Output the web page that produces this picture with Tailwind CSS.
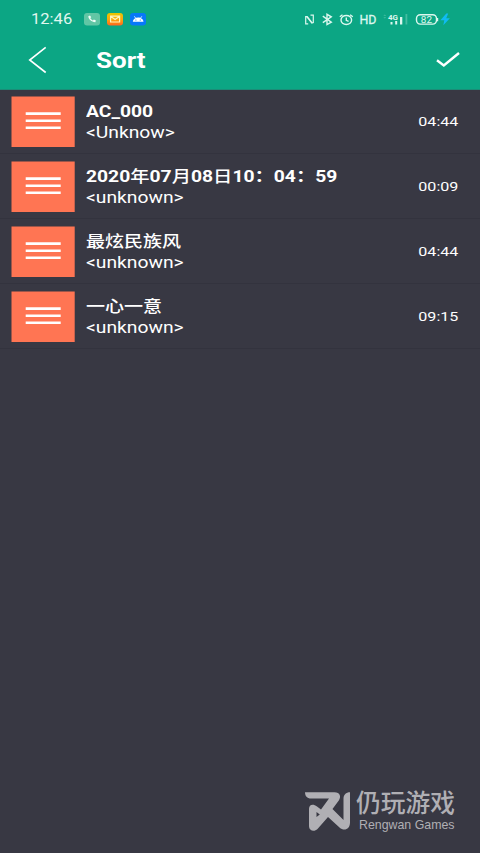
<!DOCTYPE html>
<html lang="en">
<head>
<meta charset="utf-8">
<title>Sort</title>
<script src="https://cdn.jsdelivr.net/npm/@tailwindcss/browser@4"></script>
</head>
<body class="bg-[#383843]">
<svg class="hidden">
  <symbol id="handle" viewBox="0 0 64 51"><path d="M0.5 0.4H63.7V51H0.5z" fill="#ff7553"/><path d="M14.7 17.6h35M14.7 24.7h35M14.7 31.7h35" stroke="#fff" stroke-width="2.6"/></symbol>
</svg>
<main class="flex h-[853px] w-[480px] flex-col overflow-hidden bg-[#383843] font-[Roboto,'Noto_Sans_CJK_SC',sans-serif] text-white">
  <header class="h-[90px] shrink-0 border-b border-[#1b8d78] bg-[#0ca684]">
    <div class="flex h-[38px] items-center pl-[31px] text-[#e0f7ef]">
      <span class="w-[53px]"><span class="inline-block origin-left scale-x-[1.2] text-[13.8px] leading-[38px]">12:46</span></span>
      <svg class="h-[14px] w-[62px]" viewBox="0 0 62 14">
        <defs><linearGradient id="mail" x2="0" y2="1"><stop stop-color="#e8c800"/><stop offset=".5" stop-color="#fba80c"/><stop offset="1" stop-color="#ff6420"/></linearGradient></defs>
        <rect x="0" y="1" width="16" height="12.6" rx="3" fill="#61c6a5"/>
        <path d="M4.300 4.200c.3 3.100 3.200 5.700 7 6l.6-1.700-2-1-1 .9C7.600 7.800 6.700 6.900 6.300 6l.9-.8-1.200-1.700z" fill="#f0fff9"/>
        <rect x="23" y="1" width="16" height="12.600" rx="3" fill="url(#mail)"/>
        <path d="M26.600 4.200h9v5.800h-9zM26.800 4.400l4.300 3 4.300-3" fill="none" stroke="#fff5bd" stroke-width="1.200"/>
        <rect x="46" y="1" width="16" height="12.600" rx="3" fill="#0878f9"/>
        <path d="M48.800 9.800c.2-2.700 2.500-4.400 5.300-4.400s5.200 1.700 5.400 4.400z" fill="#fff"/><path d="m50.400 4.300 1.300 1.900M57.800 4.300l-1.300 1.900" stroke="#fff" stroke-width=".8"/><circle cx="51.900" cy="8" r=".6" fill="#0878f9"/><circle cx="56.300" cy="8" r=".6" fill="#0878f9"/>
      </svg>
      <svg class="ml-[154px] h-[20px] w-[160px]" viewBox="300 9 160 20" fill="none" stroke="#dcf7ee" stroke-width="1.400">
        <path d="M308.200 23.800h-2.500v-7.200l1.600-.1 5.300 6.800M310.500 15.200h2.800v7.400l-1.500.5-5.300-6.800" stroke-width="1.200"/>
        <path d="m322.800 16.200 8.500 5.900-4.300 2.500V14.300l4.300 2.500-8.500 5.900"/>
        <ellipse cx="346.300" cy="20" rx="5.300" ry="4.500"/><path d="M346.300 17.500V20.300l2.300 1M339.800 16.800l2.700-2.100M352.800 16.800l-2.700-2.100"/>
        <g fill="#dcf7ee" stroke="none" font-family="Roboto">
          <text x="359.500" y="24.200" font-size="12.600" stroke="#dcf7ee" stroke-width=".3" textLength="17" lengthAdjust="spacingAndGlyphs">HD</text>
          <text x="388" y="19.600" font-size="8" font-weight="700" textLength="10" lengthAdjust="spacingAndGlyphs">4G</text>
          <text x="420.800" y="22.900" font-size="9" textLength="11.200" lengthAdjust="spacingAndGlyphs">82</text>
          <path d="M390.500 22h2v2.500h-2zM395.200 21h2v3.500h-2zM400 17h2.300v7.500H400z"/>
          <path d="M405.500 14h1.800v10.500h-1.800zM383.300 15.700l1.500-1.200 1.500 1.200zM383.300 17.200l1.500 1.200 1.500-1.200z" opacity=".28"/>
        </g>
        <rect x="416.500" y="14.700" width="20" height="9.400" rx="3.800"/><path d="M437.600 18v3.300" stroke-width="1.200"/>
        <path d="M446.300 13.600l-5.900 6.600h3.900l-1 5 6.600-6.900h-3.700l2-4.700z" fill="#10bbf3" stroke="none"/>
      </svg>
    </div>
    <div class="flex h-[44px] items-center">
      <svg class="ml-[28px] h-[28px] w-[20px]" viewBox="0 0 20 28" fill="none" stroke="#fff" stroke-width="1.600"><path d="M17.700 1.300 1.700 14l16 12.500"/></svg>
      <h1 class="ml-[48px] origin-left scale-x-[1.18] text-[22px] leading-[45px] font-bold">Sort</h1>
      <svg class="mr-[20px] ml-auto h-[18px] w-[25px]" viewBox="0 0 25 18" fill="none" stroke="#fff" stroke-width="2.400"><path d="m2 9.300 6.800 5.200L24 2"/></svg>
    </div>
  </header>
  <ul>
    <li class="flex h-[64px] items-start border-b border-[#33333e] pt-[6px] pl-[11px]">
      <svg class="h-[51px] w-[64px]"><use href="#handle"/></svg>
      <div class="ml-[11px] origin-left scale-x-[1.22] pt-[6px] text-[15.800px] leading-[20px] whitespace-nowrap"><p class="font-bold">AC_000</p><p class="leading-[21px]">&lt;Unknow&gt;</p></div>
      <time class="mr-[22px] ml-auto origin-right scale-x-[1.2] text-[13.400px] leading-[52px]">04:44</time>
    </li>
    <li class="flex h-[65px] items-start border-b border-[#33333e] pt-[7px] pl-[11px]">
      <svg class="h-[51px] w-[64px]"><use href="#handle"/></svg>
      <div class="ml-[11px] origin-left scale-x-[1.22] pt-[6px] text-[15.800px] leading-[20px] whitespace-nowrap"><p class="font-bold">2020<span class="font-medium">年</span>07<span class="font-medium">月</span>08<span class="font-medium">日</span>10：04：59</p><p class="leading-[21px]">&lt;unknown&gt;</p></div>
      <time class="mr-[22px] ml-auto origin-right scale-x-[1.2] text-[13.400px] leading-[52px]">00:09</time>
    </li>
    <li class="flex h-[65px] items-start border-b border-[#33333e] pt-[7px] pl-[11px]">
      <svg class="h-[51px] w-[64px]"><use href="#handle"/></svg>
      <div class="ml-[11px] origin-left scale-x-[1.22] pt-[6px] text-[15.800px] leading-[20px] whitespace-nowrap"><p class="text-[15.600px] font-medium">最炫民族风</p><p class="leading-[21px]">&lt;unknown&gt;</p></div>
      <time class="mr-[22px] ml-auto origin-right scale-x-[1.2] text-[13.400px] leading-[52px]">04:44</time>
    </li>
    <li class="flex h-[65px] items-start border-b border-[#33333e] pt-[7px] pl-[11px]">
      <svg class="h-[51px] w-[64px]"><use href="#handle"/></svg>
      <div class="ml-[11px] origin-left scale-x-[1.22] pt-[6px] text-[15.800px] leading-[20px] whitespace-nowrap"><p class="text-[15.600px] font-medium">一心一意</p><p class="leading-[21px]">&lt;unknown&gt;</p></div>
      <time class="mr-[22px] ml-auto origin-right scale-x-[1.2] text-[13.400px] leading-[52px]">09:15</time>
    </li>
  </ul>
  <footer class="mt-auto mb-[13px] ml-[300px]">
    <svg class="h-[60px] w-[170px]" viewBox="0 0 170 60" fill="#b0afb4">
      <path d="M5 12.200H34.500c5.500 0 7 4.500 4.300 8.200L32.500 29 43.500 40V18.500c0-3.700 2.500-6.300 6.500-6.300V42.500c0 7-6 9-10.500 5L28 37 17.500 49c-3.500 3.500-8.500 1.500-8.500-2.800V29c0-4.500 4-5.500 8-2.500l4 3L29 18.500H11c-4 0-6-2.500-6-6.300zM16.500 32v5l3.300-2.500z" fill-rule="evenodd"/>
      <text x="56" y="31.500" font-size="25" font-family="'Noto Sans CJK SC'" font-weight="500" textLength="99" lengthAdjust="spacingAndGlyphs">仍玩游戏</text>
      <text x="59" y="49.400" font-size="12.600" font-family="'Liberation Sans'" textLength="95.500" lengthAdjust="spacingAndGlyphs">Rengwan Games</text>
    </svg>
  </footer>
</main>
</body>
</html>
